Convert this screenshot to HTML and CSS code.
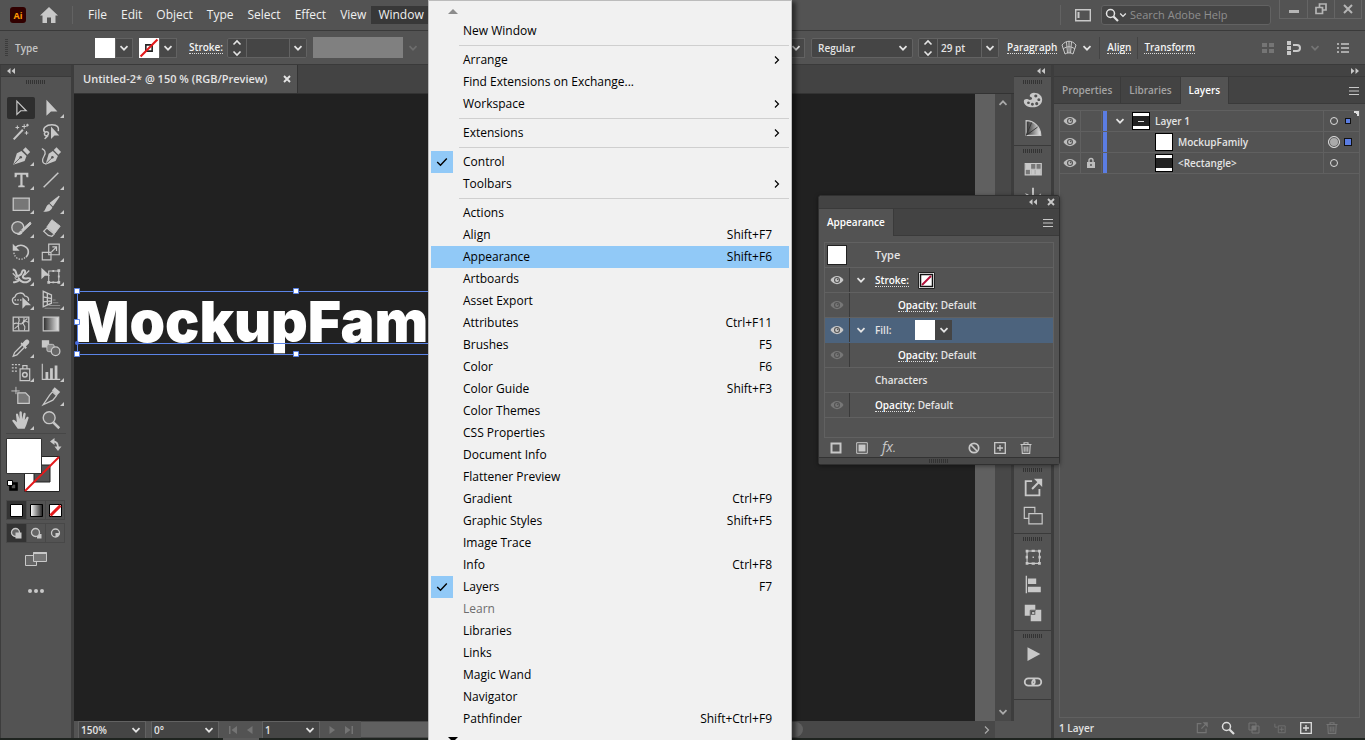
FILE: index.html
```html
<!DOCTYPE html>
<html lang="en">
<head>
<meta charset="utf-8">
<title>Untitled-2* @ 150 % (RGB/Preview)</title>
<link rel="stylesheet" href="styles.css">
</head>
<body>
<svg class="sprite" aria-hidden="true">
  <defs>
    <linearGradient id="fade"><stop offset="0" stop-color="#2b2b2b"/><stop offset="1" stop-color="#e8e8e8"/></linearGradient>
    <linearGradient id="fadeLight"><stop offset="0" stop-color="#fff"/><stop offset="1" stop-color="#222"/></linearGradient>
  </defs>
  <symbol id="chev" viewBox="0 0 10 10"><path d="M1.5 3.2 5 6.7l3.5-3.5" fill="none" stroke="currentColor" stroke-width="1.7"/></symbol>
  <symbol id="spin" viewBox="0 0 10 18"><path d="M1.5 5.5 5 2l3.5 3.5M1.5 12.500 5 16l3.500-3.500" fill="none" stroke="currentColor" stroke-width="1.600"/></symbol>
  <symbol id="dbl-left" viewBox="0 0 10 8"><path d="M4.500 1v6L1 4zM9 1v6L5.500 4z" fill="currentColor"/></symbol>
  <symbol id="dbl-right" viewBox="0 0 10 8"><path d="M1 1v6l3.500-3zM5.500 1v6L9 4z" fill="currentColor"/></symbol>
  <symbol id="cross" viewBox="0 0 10 10"><path d="M2 2l6 6M8 2L2 8" stroke="currentColor" stroke-width="1.900"/></symbol>
  <symbol id="burger" viewBox="0 0 12 10"><path d="M1 1.500h10M1 5h10M1 8.500h10" stroke="currentColor"/></symbol>
  <symbol id="eye" viewBox="0 0 14 10"><path d="M.5 5C3.500-.5 10.500-.5 13.500 5 10.500 10.500 3.500 10.500.5 5z" fill="currentColor"/><circle cx="7" cy="5" r="3" fill="#535353"/><circle cx="7" cy="5" r="1.900" fill="currentColor"/><circle cx="7.600" cy="4.400" r=".8" fill="#535353"/></symbol>
  <symbol id="lock" viewBox="0 0 10 12"><path d="M3 5V3.500a2 2 0 0 1 4 0V5" fill="none" stroke="currentColor" stroke-width="1.400"/><path d="M1 5h8v6H1z" fill="currentColor"/><path d="M5 7v2" stroke="#444" stroke-width="1.300"/></symbol>
  <symbol id="plus-box" viewBox="0 0 12 12"><path d="M.7.7h10.600v10.600H.7zM6 3v6M3 6h6" fill="none" stroke="currentColor" stroke-width="1.300"/></symbol>
  <symbol id="trash" viewBox="0 0 12 12"><path d="M.5 2.500h11M4 2V.7h4V2M1.800 3l.5 8.400h7.400l.5-8.400M4.200 4.500v5.300M6 4.500v5.300M7.800 4.500v5.300" fill="none" stroke="currentColor" stroke-width="1.100"/></symbol>
  <symbol id="lens" viewBox="0 0 14 14"><circle cx="5.500" cy="5.500" r="4" fill="none" stroke="currentColor" stroke-width="1.500"/><path d="M8.500 8.500l4.500 4.500" stroke="currentColor" stroke-width="2.200"/></symbol>
  <symbol id="export" viewBox="0 0 24 24"><path d="M11 4.500H4v15.500h15v-7" fill="none" stroke="currentColor" stroke-width="2"/><path d="M11 13l8-8" stroke="currentColor" stroke-width="2.200"/><path d="M13 2h9v9z" fill="currentColor"/></symbol>
  <symbol id="first" viewBox="0 0 10 10"><path d="M1 1h1.500v8H1zM9 1v8L3.500 5z" fill="currentColor"/></symbol>
  <symbol id="prev" viewBox="0 0 10 10"><path d="M7.500 1v8L2 5z" fill="currentColor"/></symbol>
  <symbol id="next" viewBox="0 0 10 10"><path d="M2.500 1v8L8 5z" fill="currentColor"/></symbol>
  <symbol id="last" viewBox="0 0 10 10"><path d="M7.500 1H9v8H7.500zM1 1v8l5.500-4z" fill="currentColor"/></symbol>
  <symbol id="submenu" viewBox="0 0 8 10"><path d="M2 1.500 5.500 5 2 8.500" fill="none" stroke="currentColor" stroke-width="1.200"/></symbol>
  <symbol id="tick" viewBox="0 0 12 10"><path d="M1.200 5 4.500 8.200 10.800 1.500" fill="none" stroke="currentColor" stroke-width="1.400"/></symbol>

  <symbol id="t-select" viewBox="0 0 24 24"><path d="M7.500 4.500v14.500l4.200-4h6z" fill="none" stroke="currentColor" stroke-width="1.300"/></symbol>
  <symbol id="t-direct" viewBox="0 0 24 24"><path d="M7 3v17.500l5-4.800h7z" fill="currentColor"/></symbol>
  <symbol id="t-wand" viewBox="0 0 24 24"><path d="M4 20 14 9.500" stroke="currentColor" stroke-width="2.200"/><path d="M15.500 3.500v5M13 6h5M8 5v4M6 7h4M18 11v4M16 13h4M19 3v3M17.500 4.500h3" stroke="currentColor" stroke-width="1.100"/></symbol>
  <symbol id="t-lasso" viewBox="0 0 24 24"><path d="M9 16c-4 1-5.500-2-3-4 2-1 4 .5 3 2.500-1 3-3 4-4 5M5 12C2 8 7 4 13 4s8 3 7 7" fill="none" stroke="currentColor" stroke-width="1.700"/><path d="M12 6v13.500l3.800-3.800H21z" fill="currentColor"/></symbol>
  <symbol id="t-pen" viewBox="0 0 24 24"><path d="M12.500 6.500 18 12 16 17.500 3.500 21.500 7.500 9z" fill="currentColor"/><path d="M14 5.500 17 2.500 22 7.500l-3 3z" fill="currentColor"/><path d="M4.500 20.500l6.500-6.500" stroke="#535353"/><circle cx="11.700" cy="13.300" r="1.400" fill="#535353"/></symbol>
  <symbol id="t-curve" viewBox="0 0 24 24"><path d="M14 6.500 19.500 12 17 17.500 6 21.500 9.500 9.500z" fill="currentColor"/><path d="M15 5.500 18 2.500 23 7.500l-3 3z" fill="currentColor"/><path d="M7 20l6-6" stroke="#535353"/><circle cx="13.500" cy="13.300" r="1.400" fill="#535353"/><path d="M2 4c3 1 5 4 2.500 8C2 16 2 20.500 6.500 20.500" fill="none" stroke="currentColor" stroke-width="1.400"/></symbol>
  <symbol id="t-type" viewBox="0 0 24 24"><path d="M5 4h15v5h-2L17.200 6.300H13.700v11.500l2.300.5V20h-7v-1.700l2.300-.5V6.300H7.800L7 9H5z" fill="currentColor"/></symbol>
  <symbol id="t-line" viewBox="0 0 24 24"><path d="M4 20 20 4" stroke="currentColor" stroke-width="1.600"/></symbol>
  <symbol id="t-rect" viewBox="0 0 24 24"><path d="M3.500 5.500h17.500v13.500H3.500z" fill="#777" stroke="currentColor" stroke-width="1.400"/></symbol>
  <symbol id="t-brush" viewBox="0 0 24 24"><path d="M21 3.500 11.500 11l2.500 2.500z" fill="currentColor" stroke="currentColor" stroke-width="1.500"/><path d="M10 12l3.500 3.500c-1 3.500-5 5.500-10 5 3-1.500 2.500-7 6.500-8.500z" fill="currentColor"/></symbol>
  <symbol id="t-blob" viewBox="0 0 24 24"><circle cx="8.500" cy="11.500" r="6.500" fill="#6a6a6a" stroke="currentColor" stroke-width="1.500"/><path d="M22 5.500 12.500 14l1.800 1.800L23 7.500z" fill="currentColor" stroke="currentColor"/><path d="M11.800 14.800l2 2c-1 2.500-3.500 3-6.300 2.700 2-1 2-3.500 4.300-4.700z" fill="currentColor"/></symbol>
  <symbol id="t-eraser" viewBox="0 0 24 24"><path d="M13 3l9 7-6 8-8.500-7z" fill="currentColor" stroke="currentColor"/><path d="M7.500 12l8 6.500-2.500 2.500-4-1-5-4.500z" fill="none" stroke="currentColor" stroke-width="1.300"/></symbol>
  <symbol id="t-rotate" viewBox="0 0 24 24"><path d="M6 7c6-5 14-1 14 5 0 2-1 4-2.500 5.500" fill="none" stroke="currentColor" stroke-width="1.800"/><path d="M16.500 18C12 22 5 19.500 4.200 12.500" fill="none" stroke="currentColor" stroke-width="1.400" stroke-dasharray="1.500 1.500"/><path d="M3 3v7.500h7.500z" fill="currentColor"/></symbol>
  <symbol id="t-scale" viewBox="0 0 24 24"><path d="M9.500 3.500H21v11.500H9.500zM2.500 12.500h9.500v8H2.500z" fill="none" stroke="currentColor" stroke-width="1.300"/><path d="M12.500 12l5-5M13.500 6.500h4.500v4.500" fill="none" stroke="currentColor" stroke-width="1.300"/></symbol>
  <symbol id="t-width" viewBox="0 0 24 24"><path d="M3 5c4 0 3 3 4.500 6 1 2 5 0 5.500-3s4-3 3.500 0-4 4-2 6 7-1 7.500 1-4 5-8 3.500-5-5-4-3.500-3 4.500-6.500 3.500" fill="none" stroke="currentColor" stroke-width="2.200"/><circle cx="7.500" cy="14" r="2" fill="none" stroke="currentColor"/><path d="M3 9l5 5M16 11l5-5" stroke="currentColor" stroke-width="1.300"/></symbol>
  <symbol id="t-free" viewBox="0 0 24 24"><path d="M9.500 6.500H20.500v12.500H9.500z" fill="none" stroke="currentColor" stroke-width="1.200"/><path d="M19 4.500h3v3h-3zM19 17.500h3v3h-3zM8 17.500h3v3H8zM13.500 5.500h2v2h-2zM13.500 18h2v2h-2zM19.500 11.500h2v2h-2z" fill="currentColor"/><path d="M1.500 3v12.500l3.800-3.800h5.700z" fill="currentColor"/></symbol>
  <symbol id="t-shape" viewBox="0 0 24 24"><path d="M9.500 16.500c-7 1.500-9-6-4-8C6.500 4 14 2.500 16 7.500c3.500.5 5 3 4 5.500" fill="none" stroke="currentColor" stroke-width="1.400"/><path d="M5 12h9" stroke="currentColor" stroke-width="1.500" stroke-dasharray="1.500 1.500"/><path d="M13.500 9v12.500l3.700-3.700H23z" fill="currentColor"/></symbol>
  <symbol id="t-persp" viewBox="0 0 24 24"><path d="M3.500 2.500v17l9-4V6.500zM8 4.500v12.500M3.500 8.500l9 2M3.500 14l9-1" fill="none" stroke="currentColor" stroke-width="1.400"/><path d="M14 12h3M14 15h6M10 18h12M5 21h17" stroke="#909090"/></symbol>
  <symbol id="t-mesh" viewBox="0 0 24 24"><path d="M3.500 4.500h17v15h-17z" fill="none" stroke="currentColor" stroke-width="1.400"/><path d="M4 12c4-3 7 2 10-1s4-2 6-1M9 5c3 3-1 6 0 9s0 3 1 5M15 5c2 3-3 5 0 8s0 4 1 6M5 17l5-4M13 11l6-5" fill="none" stroke="currentColor" stroke-width="1.200"/></symbol>
  <symbol id="t-grad" viewBox="0 0 24 24"><path d="M3.500 4.500h17v15h-17z" fill="url(#fade)" stroke="currentColor" stroke-width="1.200"/></symbol>
  <symbol id="t-drop" viewBox="0 0 24 24"><path d="M13 9 5 17 3.500 21l4-1.500 8-8" fill="none" stroke="currentColor" stroke-width="1.400"/><path d="M11.500 7.500l5.500 5.500 1.500-1.500-1.200-1.200 3.200-3.300c2-2.500-1.500-5.500-4-3.500l-3 3.200-1-1z" fill="currentColor"/></symbol>
  <symbol id="t-blend" viewBox="0 0 24 24"><path d="M2 3.500h8v8H2z" fill="currentColor"/><rect x="7.500" y="8" width="8" height="8" rx="2" fill="#888" stroke="currentColor"/><circle cx="17" cy="15.500" r="4.700" fill="#666" stroke="currentColor" stroke-width="1.400"/></symbol>
  <symbol id="t-spray" viewBox="0 0 24 24"><path d="M11 8.500h10.500v13H11zM14 8.500V5h4.500v3.500" fill="none" stroke="currentColor" stroke-width="1.300"/><circle cx="16.200" cy="15" r="2.500" fill="none" stroke="currentColor" stroke-width="1.600"/><path d="M2 4h2M5.500 4h2M9 4h2M2 7.500h2M5.500 7.500h2M2 11h2M5.500 11h2" stroke="currentColor" stroke-width="1.300"/></symbol>
  <symbol id="t-graph" viewBox="0 0 24 24"><path d="M2.500 3v17H22" fill="none" stroke="currentColor" stroke-width="1.200"/><path d="M6 12h3v8H6zM11 8h3v12h-3zM16 5h3v15h-3z" fill="currentColor"/></symbol>
  <symbol id="t-board" viewBox="0 0 24 24"><path d="M8.500 8.500h8.500l4 4v7.500H8.500z" fill="#777" stroke="currentColor" stroke-width="1.300"/><path d="M6.500 2v8M1.500 6.500h9" stroke="currentColor"/></symbol>
  <symbol id="t-slice" viewBox="0 0 24 24"><path d="M13.500 7.500l4.500 4-4 5L3.500 21.500 10.500 11z" fill="none" stroke="currentColor" stroke-width="1.400"/><path d="M13 6l3-3.500 6 5-3.500 4z" fill="currentColor"/></symbol>
  <symbol id="t-hand" viewBox="0 0 24 24"><path d="M8.500 21.500 2.500 13c0-1.500 2-1.500 3-.5l2 2L6.500 6c.3-1.500 2-1.400 2.400 0l1.400 5V3.500c.3-1.400 2.300-1.400 2.600 0l.3 7.500 1.500-6c.5-1.300 2.300-1 2.400.4l-1 6.600 2-3c.8-1 2.400-.4 2.200.9l-2.500 7.600-1.800 4z" fill="currentColor"/></symbol>
  <symbol id="t-zoom" viewBox="0 0 24 24"><circle cx="10" cy="9.500" r="6.500" fill="#666" stroke="currentColor" stroke-width="1.500"/><path d="M14.500 14.500l6.500 6.500" stroke="currentColor" stroke-width="2.800"/></symbol>

  <symbol id="d-color" viewBox="0 0 24 24"><path fill-rule="evenodd" d="M13 4c5 0 9 3 9 7.500 0 5-4 8.500-10 8.500S2 17 2 13.500C2 11 5 10.500 7 11.500s4 0 4-1.500-3-1-2.500-3C9 5 11 4 13 4zM15 6a1.700 1.700 0 1 0 .1 0zM18.300 10a1.600 1.600 0 1 0 .1 0zM16 14.300a1.700 1.700 0 1 0 .1 0zM11.300 15a1.600 1.600 0 1 0 .1 0zM7 13.500a1.500 1.500 0 1 0 .1 0z" fill="currentColor"/></symbol>
  <symbol id="d-guide" viewBox="0 0 24 24"><path d="M4.500 4v16h16C20.500 11 13 4 4.500 4z" fill="url(#fade)" stroke="currentColor" stroke-width="1.300"/><path d="M4.500 20 10.500 6M4.500 20 17 11" stroke="#333"/></symbol>
  <symbol id="d-swatch" viewBox="0 0 24 24"><path d="M3.500 6h17.500v12.500H3.500zM3.500 12.300h17.500M9.300 6v12.500M15.200 6v12.500" fill="#777" stroke="currentColor" stroke-width="1.300"/><path d="M4 6.500h5v6H4zM15 12.500h5.500v6H15zM10 12.500h4v6h-4z" fill="currentColor"/></symbol>
  <symbol id="d-brush" viewBox="0 0 24 24"><path d="M11 2h2v9h3l1 4H7l1-4h3zM3 8l4 1v3zM21 8l-4 3 2 2z" fill="currentColor"/></symbol>
  <symbol id="d-boards" viewBox="0 0 24 24"><path d="M7.500 14.500h-5v-12H14v6M7.500 9.500H22v11H7.500z" fill="none" stroke="currentColor" stroke-width="1.300"/></symbol>
  <symbol id="d-transform" viewBox="0 0 24 24"><path d="M5.500 5.500h13.500v13.500H5.500z" fill="none" stroke="currentColor" stroke-width="1.200"/><path d="M4 4h3v3H4zM17.500 4h3v3h-3zM4 17.500h3v3H4zM17.500 17.500h3v3h-3zM10.500 4h3.500v2.500h-3.500zM10.500 18h3.500v2.500h-3.500zM4 10.700h2.500v3H4zM18 10.700h2.500v3H18zM11.500 11.500h1.500V13h-1.500z" fill="currentColor"/></symbol>
  <symbol id="d-align" viewBox="0 0 24 24"><path d="M4 2h1.500v19H4zM6.500 5h9v6h-9zM6.500 14h14v6h-14z" fill="currentColor"/></symbol>
  <symbol id="d-path" viewBox="0 0 24 24"><path fill-rule="evenodd" d="M3 3h11.500v5.500H21V21H9.500v-6H3zM9.500 9.500v4.500h5V9.500z" fill="currentColor"/><path d="M9 15V9h6" fill="none" stroke="#535353"/><path d="M11 11h2.500v2H11z" fill="currentColor"/></symbol>
  <symbol id="d-play" viewBox="0 0 24 24"><path d="M6 4.500v15l14-7.500z" fill="currentColor"/></symbol>
  <symbol id="d-link" viewBox="0 0 24 24"><path d="M13 16H7a4 4 0 0 1 0-8h4c3 0 4 5 1.500 6.500M11 8h6a4 4 0 0 1 0 8h-3c-3 0-4-4.500-1.500-6" fill="none" stroke="currentColor" stroke-width="2"/></symbol>
</svg>

<div class="app">
  <header class="menubar">
    <svg class="ai-logo" viewBox="0 0 16 16" role="img" aria-label="Ai"><rect width="16" height="16" rx="3" fill="#310000"/><text x="8" y="11.500" text-anchor="middle" class="ai-text">Ai</text></svg>
    <button class="home" aria-label="Home"><svg viewBox="0 0 18 16"><path d="M9 0 18 8.500h-2.500V16H11v-5.500H7V16H2.500V8.500H0z" fill="currentColor"/></svg></button>
    <nav class="menus">
      <button>File</button><button>Edit</button><button>Object</button><button>Type</button><button>Select</button><button>Effect</button><button>View</button><button class="open">Window</button>
    </nav>
    <div class="menubar-right">
      <button class="workspace" aria-label="Switch workspace"><svg viewBox="0 0 16 14"><path d="M.7 1.700h14.600v11H.7z" fill="none" stroke="currentColor" stroke-width="1.400"/><path d="M2.500 4h2v6h-2z" fill="currentColor"/></svg></button>
      <label class="search"><svg class="i14"><use href="#lens"/></svg><svg class="i8"><use href="#chev"/></svg><input type="search" placeholder="Search Adobe Help" aria-label="Search Adobe Help"></label>
      <div class="winctl">
        <button aria-label="Minimize"><svg viewBox="0 0 12 12"><path d="M1 7h10v3H1z" fill="currentColor"/></svg></button>
        <button aria-label="Restore"><svg viewBox="0 0 12 12"><path d="M4.500 4V1H11v6H8M1 4.500h6.500V10.500H1z" fill="none" stroke="currentColor" stroke-width="1.700"/></svg></button>
        <button aria-label="Close"><svg viewBox="0 0 12 12"><path d="M2 2l8 8M10 2l-8 8" stroke="currentColor" stroke-width="2"/></svg></button>
      </div>
    </div>
  </header>

  <section class="control" aria-label="Control">
    <div class="control-left">
      <span class="grip-v"></span>
      <span class="kind">Type</span>
      <button class="swatch-btn" aria-label="Fill"><span class="chip"></span><span class="drop"><svg class="i10"><use href="#chev"/></svg></span></button>
      <button class="swatch-btn" aria-label="Stroke color"><svg class="chip" viewBox="0 0 19 19"><path d="M6.500 6.500h6v6h-6z" fill="none" stroke="#222" stroke-width="1.500"/><path d="M1.500 17.500l16-16" stroke="#e3191b" stroke-width="2"/></svg><span class="drop"><svg class="i10"><use href="#chev"/></svg></span></button>
      <label class="dotted bold" for="sw">Stroke:</label>
      <span class="num"><svg class="spin"><use href="#spin"/></svg><input id="sw" type="text"><span class="drop"><svg class="i10"><use href="#chev"/></svg></span></span>
      <span class="profile"><span></span><svg class="i10"><use href="#chev"/></svg></span>
    </div>
    <div class="control-right">
      <button class="drop family" aria-label="Font family"><svg class="i10"><use href="#chev"/></svg></button>
      <span class="combo style-combo"><select aria-label="Font style"><option>Regular</option></select><svg class="i10"><use href="#chev"/></svg></span>
      <span class="num size"><svg class="spin"><use href="#spin"/></svg><input type="text" value="29 pt" aria-label="Font size"><span class="drop"><svg class="i10"><use href="#chev"/></svg></span></span>
      <a class="dotted" href="#paragraph">Paragraph</a>
      <button class="warp" aria-label="Make envelope"><svg viewBox="0 0 16 16"><path d="M1 5c4-5 10-5 14 0l-3 9c-2-1.500-6-1.500-8 0zM5.500 2 6.500 13M10.500 2 9.500 13M2 9c4-3 8-3 12 0M8 1v12" fill="none" stroke="currentColor"/></svg><svg class="i10"><use href="#chev"/></svg></button>
      <span class="vsep"></span>
      <a class="dotted" href="#align">Align</a>
      <span class="vsep"></span>
      <a class="dotted" href="#transform">Transform</a>
    </div>
    <div class="control-end">
      <button class="dim" aria-label="Isolate"><svg viewBox="0 0 12 12"><path d="M0 1h5v4H0zM7 1h5v4H7zM0 7h5v4H0zM7 7h5v4H7z" fill="currentColor"/></svg></button>
      <button aria-label="Snap"><svg viewBox="0 0 14 14"><path d="M0 0h4v4H0zM0 5h4v4H0zM0 10h4v4H0z" fill="currentColor"/><path d="M6 4h4a3 3 0 0 1 0 6H6" fill="none" stroke="currentColor" stroke-width="2"/></svg></button>
      <button class="dim" aria-label="Snap options"><svg class="i10"><use href="#chev"/></svg></button>
      <button class="list-btn" aria-label="Control menu"><svg viewBox="0 0 12 10"><path d="M0 1h2M0 5h2M0 9h2M4 1h8M4 5h8M4 9h8" stroke="currentColor" stroke-width="1.400"/></svg></button>
    </div>
  </section>

  <main class="work">
    <aside class="tools" aria-label="Tools">
      <div class="strip"><svg class="arrows"><use href="#dbl-left"/></svg></div>
      <div class="grip"></div>
      <div class="tool-grid">
        <button class="on" aria-label="Selection"><svg><use href="#t-select"/></svg></button><button class="more" aria-label="Direct selection"><svg><use href="#t-direct"/></svg></button>
        <button aria-label="Magic wand"><svg><use href="#t-wand"/></svg></button><button aria-label="Lasso"><svg><use href="#t-lasso"/></svg></button>
        <button class="more" aria-label="Pen"><svg><use href="#t-pen"/></svg></button><button aria-label="Curvature"><svg><use href="#t-curve"/></svg></button>
        <button class="more" aria-label="Type"><svg><use href="#t-type"/></svg></button><button class="more" aria-label="Line"><svg><use href="#t-line"/></svg></button>
        <button class="more" aria-label="Rectangle"><svg><use href="#t-rect"/></svg></button><button class="more" aria-label="Paintbrush"><svg><use href="#t-brush"/></svg></button>
        <button class="more" aria-label="Shaper"><svg><use href="#t-blob"/></svg></button><button class="more" aria-label="Eraser"><svg><use href="#t-eraser"/></svg></button>
        <button class="more" aria-label="Rotate"><svg><use href="#t-rotate"/></svg></button><button class="more" aria-label="Scale"><svg><use href="#t-scale"/></svg></button>
        <button class="more" aria-label="Width"><svg><use href="#t-width"/></svg></button><button class="more" aria-label="Free transform"><svg><use href="#t-free"/></svg></button>
        <button class="more" aria-label="Shape builder"><svg><use href="#t-shape"/></svg></button><button class="more" aria-label="Perspective grid"><svg><use href="#t-persp"/></svg></button>
        <button aria-label="Mesh"><svg><use href="#t-mesh"/></svg></button><button aria-label="Gradient"><svg><use href="#t-grad"/></svg></button>
        <button class="more" aria-label="Eyedropper"><svg><use href="#t-drop"/></svg></button><button aria-label="Blend"><svg><use href="#t-blend"/></svg></button>
        <button class="more" aria-label="Symbol sprayer"><svg><use href="#t-spray"/></svg></button><button class="more" aria-label="Column graph"><svg><use href="#t-graph"/></svg></button>
        <button aria-label="Artboard"><svg><use href="#t-board"/></svg></button><button class="more" aria-label="Slice"><svg><use href="#t-slice"/></svg></button>
        <button class="more" aria-label="Hand"><svg><use href="#t-hand"/></svg></button><button aria-label="Zoom"><svg><use href="#t-zoom"/></svg></button>
      </div>
      <svg class="fillstroke" viewBox="0 0 60 58" role="img" aria-label="Fill and stroke">
        <path fill-rule="evenodd" d="M18.500 19.500h35v35h-35zM28 28v17h16V28z" fill="#fff" stroke="#222"/><path d="M19 54l34-34" stroke="#e3191b" stroke-width="2"/>
        <path d="M.5 1.500h35v35h-35z" fill="#fff" stroke="#333"/>
        <path d="M47 4.500c3.500 0 5 2 5 6" fill="none" stroke="#c8c8c8" stroke-width="1.800"/><path d="M48.500 1v7L44 4.500zM48.500 9.500h7L52 14z" fill="#c8c8c8"/>
        <path d="M4.500 46.500h6v6h-6z" fill="none" stroke="#000" stroke-width="2.600"/><path d="M1.500 43.500h5v5h-5z" fill="#fff" stroke="#000"/>
      </svg>
      <div class="modes">
        <button class="on" aria-label="Color"><svg viewBox="0 0 13 13"><path d="M.5.5h12v12H.5z" fill="#fff" stroke="#000"/></svg></button>
        <button aria-label="Gradient"><svg viewBox="0 0 13 13"><path d="M.5.5h12v12H.5z" fill="url(#fadeLight)" stroke="#000"/></svg></button>
        <button aria-label="None"><svg viewBox="0 0 13 13"><path d="M.5.5h12v12H.5z" fill="#fff" stroke="#000"/><path d="M1.500 11.500l10-10" stroke="#e3191b" stroke-width="3"/></svg></button>
      </div>
      <div class="modes">
        <button class="on" aria-label="Draw normal"><svg viewBox="0 0 13 13"><circle cx="5.500" cy="5.500" r="4" fill="#666" stroke="#c8c8c8" stroke-width="1.300"/><path d="M5.500 5.500h6v6h-6z" fill="#c8c8c8"/></svg></button>
        <button aria-label="Draw behind"><svg viewBox="0 0 13 13"><path d="M7 7h4.500v4.500H7z" fill="#c8c8c8"/><circle cx="5.500" cy="5.500" r="4" fill="#666" stroke="#c8c8c8" stroke-width="1.300"/></svg></button>
        <button aria-label="Draw inside"><svg viewBox="0 0 13 13"><circle cx="6.500" cy="6" r="4" fill="#555" stroke="#c8c8c8" stroke-width="1.300"/><path d="M6.500 6h3.500v2L8.500 10h-2z" fill="#c8c8c8"/></svg></button>
      </div>
      <button class="screen" aria-label="Screen mode"><svg viewBox="0 0 22 16"><path d="M.5 4.500h11v10H.5z" fill="#666" stroke="#c8c8c8"/><path d="M8.500 1.500h13v9h-13z" fill="#777" stroke="#c8c8c8"/><path d="M8.500 2h13" stroke="#c8c8c8" stroke-width="2"/></svg></button>
      <button class="dots" aria-label="Edit toolbar"><i></i><i></i><i></i></button>
    </aside>

    <section class="document">
      <div class="doc-tabs"><div class="doc-tab"><span>Untitled-2* @ 150 % (RGB/Preview)</span><button aria-label="Close document"><svg class="i10"><use href="#cross"/></svg></button></div></div>
      <div class="stage">
        <div class="artboard">
          <div class="art">
            <span class="art-text">MockupFam</span>
            <svg class="bounds" viewBox="0 0 438 63"><path d="M0 0h438v63H0zM0 52h438" fill="none" stroke="#5b84e8" stroke-width="1" shape-rendering="crispEdges"/><path d="M-2.500-2.500h5v5h-5zM-2.500 28.500h5v5h-5zM-2.500 60.500h5v5h-5zM216.500-2.500h5v5h-5zM216.500 60.500h5v5h-5z" fill="#fff" stroke="#5b84e8"/><circle cx="0" cy="52" r="2" fill="#4a6de0"/></svg>
          </div>
        </div>
        <div class="beyond"></div>
        <div class="vscroll"><svg class="i10 up"><use href="#chev"/></svg><svg class="i10"><use href="#chev"/></svg></div>
      </div>
      <div class="status">
        <span class="combo zoomlvl"><select aria-label="Zoom"><option>150%</option></select><svg class="i10"><use href="#chev"/></svg></span>
        <span class="combo angle"><select aria-label="Rotate view"><option>0°</option></select><svg class="i10"><use href="#chev"/></svg></span>
        <button class="page" aria-label="First"><svg class="i10"><use href="#first"/></svg></button><button class="page" aria-label="Previous"><svg class="i10"><use href="#prev"/></svg></button>
        <span class="combo boardno"><select aria-label="Artboard number"><option>1</option></select><svg class="i10"><use href="#chev"/></svg></span>
        <button class="page" aria-label="Next"><svg class="i10"><use href="#next"/></svg></button><button class="page" aria-label="Last"><svg class="i10"><use href="#last"/></svg></button>
        <div class="hscroll"><span class="thumb"></span><svg class="i10"><use href="#submenu"/></svg></div>
      </div>
    </section>

    <aside class="dock">
      <div class="strip end"><svg class="arrows"><use href="#dbl-left"/></svg></div>
      <div class="group"><button aria-label="Color"><svg><use href="#d-color"/></svg></button><button aria-label="Color guide"><svg><use href="#d-guide"/></svg></button></div>
      <div class="group"><button aria-label="Swatches"><svg><use href="#d-swatch"/></svg></button><button aria-label="Brushes"><svg><use href="#d-brush"/></svg></button><button aria-label="Symbols"><svg><use href="#t-spray"/></svg></button></div>
      <div class="group"><button aria-label="Stroke"><svg><use href="#t-line"/></svg></button><button aria-label="Gradient"><svg><use href="#t-grad"/></svg></button></div>
      <div class="group"><button aria-label="Transparency"><svg><use href="#t-blend"/></svg></button><button aria-label="Appearance"><svg><use href="#t-zoom"/></svg></button><button aria-label="Graphic styles"><svg><use href="#t-rect"/></svg></button><button aria-label="Layers"><svg><use href="#d-boards"/></svg></button><button aria-label="Libraries"><svg><use href="#t-mesh"/></svg></button></div>
      <div class="group"><button aria-label="Asset export"><svg><use href="#export"/></svg></button><button aria-label="Artboards"><svg><use href="#d-boards"/></svg></button></div>
      <div class="group"><button aria-label="Transform"><svg><use href="#d-transform"/></svg></button><button aria-label="Align"><svg><use href="#d-align"/></svg></button><button aria-label="Pathfinder"><svg><use href="#d-path"/></svg></button></div>
      <div class="group"><button aria-label="Actions"><svg><use href="#d-play"/></svg></button><button aria-label="Links"><svg><use href="#d-link"/></svg></button></div>
    </aside>

    <aside class="panel">
      <div class="strip end"><svg class="arrows"><use href="#dbl-right"/></svg></div>
      <div class="tabs"><button>Properties</button><button>Libraries</button><button class="on">Layers</button><button class="menu-btn" aria-label="Panel menu"><svg><use href="#burger"/></svg></button></div>
      <div class="layers">
        <div class="layer first"><button class="c-eye" aria-label="Toggle visibility"><svg class="eye"><use href="#eye"/></svg></button><span class="c-lock"></span><span class="bar"></span><button class="c-open" aria-label="Collapse"><svg class="i10"><use href="#chev"/></svg></button><span class="thumbnail bands"><i></i></span><span class="name">Layer 1</span><span class="c-target"><i class="ring"></i><i class="sq small"></i></span></div>
        <div class="layer child"><button class="c-eye" aria-label="Toggle visibility"><svg class="eye"><use href="#eye"/></svg></button><span class="c-lock"></span><span class="bar"></span><span class="c-open"></span><span class="thumbnail"></span><span class="name">MockupFamily</span><span class="c-target"><i class="ring full"></i><i class="sq"></i></span></div>
        <div class="layer child"><button class="c-eye" aria-label="Toggle visibility"><svg class="eye"><use href="#eye"/></svg></button><button class="c-lock" aria-label="Unlock"><svg><use href="#lock"/></svg></button><span class="bar"></span><span class="c-open"></span><span class="thumbnail bands"></span><span class="name">&lt;Rectangle&gt;</span><span class="c-target"><i class="ring"></i></span></div>
      </div>
      <div class="panel-foot"><span>1 Layer</span>
        <div><button class="dim" aria-label="Collect for export"><svg><use href="#export"/></svg></button><button aria-label="Locate object"><svg><use href="#lens"/></svg></button><button class="dim" aria-label="Clipping mask"><svg viewBox="0 0 12 12"><path d="M1 1h7v7H1zM4 4h7v7H4z" fill="none" stroke="currentColor"/><path d="M4 4h4v4H4z" fill="currentColor"/></svg></button><button class="dim" aria-label="New sublayer"><svg viewBox="0 0 14 12"><path d="M5 3.500h8v8H5zM9 5v5M6.500 7.500h5M1 1v4h3" fill="none" stroke="currentColor"/></svg></button><button aria-label="New layer"><svg><use href="#plus-box"/></svg></button><button class="dim" aria-label="Delete"><svg><use href="#trash"/></svg></button></div>
      </div>
    </aside>
  </main>
  <div class="taskbar"><span></span></div>
</div>

<section class="appearance" aria-label="Appearance">
  <div class="strip end"><svg class="arrows"><use href="#dbl-left"/></svg><svg class="i10"><use href="#cross"/></svg></div>
  <div class="tabs"><button class="on">Appearance</button><button class="menu-btn" aria-label="Panel menu"><svg><use href="#burger"/></svg></button></div>
  <div class="attrs">
    <div class="attr"><span class="chip edge"></span><b>Type</b></div>
    <div class="attr"><button class="c-vis" aria-label="Toggle visibility"><svg class="eye"><use href="#eye"/></svg></button><svg class="i10 tw"><use href="#chev"/></svg><a class="dotted" href="#stroke">Stroke:</a><svg class="nochip" viewBox="0 0 17 17"><path d="M.5.5h16v16H.5z" fill="#fff" stroke="#222"/><path d="M2.500 2.500h12v12h-12z" fill="#fff" stroke="#111" stroke-width="1.500"/><path d="M4 13l9-9" stroke="#b3123b" stroke-width="2"/></svg></div>
    <div class="attr sub"><button class="c-vis off" aria-label="Toggle visibility"><svg class="eye"><use href="#eye"/></svg></button><a class="dotted" href="#opacity">Opacity:</a><span>Default</span></div>
    <div class="attr sel"><button class="c-vis" aria-label="Toggle visibility"><svg class="eye"><use href="#eye"/></svg></button><svg class="i10 tw"><use href="#chev"/></svg><span class="fill-name">Fill:</span><button class="swatch-btn" aria-label="Fill color"><span class="chip"></span><span class="drop"><svg class="i10"><use href="#chev"/></svg></span></button></div>
    <div class="attr sub"><button class="c-vis off" aria-label="Toggle visibility"><svg class="eye"><use href="#eye"/></svg></button><a class="dotted" href="#opacity">Opacity:</a><span>Default</span></div>
    <div class="attr plain"><span>Characters</span></div>
    <div class="attr main-op"><button class="c-vis off" aria-label="Toggle visibility"><svg class="eye"><use href="#eye"/></svg></button><a class="dotted" href="#opacity">Opacity:</a><span>Default</span></div>
    <div class="attr-rest"></div>
  </div>
  <div class="attr-foot">
    <button aria-label="Add new stroke"><svg viewBox="0 0 12 12"><path d="M1.500 1.500h9v9h-9z" fill="none" stroke="currentColor" stroke-width="2"/></svg></button>
    <button aria-label="Add new fill"><svg viewBox="0 0 12 12"><path d="M.7.7h10.600v10.600H.7z" fill="none" stroke="currentColor"/><path d="M2.500 2.500h7v7h-7z" fill="currentColor"/></svg></button>
    <button class="fx" aria-label="Add effect">fx<small>.</small></button>
    <span class="spacer"></span>
    <button aria-label="Clear appearance"><svg viewBox="0 0 12 12"><circle cx="6" cy="6" r="4.700" fill="none" stroke="currentColor" stroke-width="1.700"/><path d="M3 3l6 6" stroke="currentColor" stroke-width="1.700"/></svg></button>
    <button aria-label="Duplicate"><svg><use href="#plus-box"/></svg></button>
    <button aria-label="Delete"><svg><use href="#trash"/></svg></button>
  </div>
  <div class="resize"></div>
</section>

<div class="window-menu" role="menu">
  <div class="scroll-up"><svg viewBox="0 0 10 5"><path d="M5 0l5 5H0z" fill="#8c8c8c"/></svg></div>
  <button class="item"><span class="mark"></span>New Window</button>
  <hr>
  <button class="item"><span class="mark"></span>Arrange<svg class="sub"><use href="#submenu"/></svg></button>
  <button class="item"><span class="mark"></span>Find Extensions on Exchange...</button>
  <button class="item"><span class="mark"></span>Workspace<svg class="sub"><use href="#submenu"/></svg></button>
  <hr>
  <button class="item"><span class="mark"></span>Extensions<svg class="sub"><use href="#submenu"/></svg></button>
  <hr>
  <button class="item"><span class="mark checked"><svg><use href="#tick"/></svg></span>Control</button>
  <button class="item"><span class="mark"></span>Toolbars<svg class="sub"><use href="#submenu"/></svg></button>
  <hr>
  <button class="item"><span class="mark"></span>Actions</button>
  <button class="item"><span class="mark"></span>Align<kbd>Shift+F7</kbd></button>
  <button class="item hot"><span class="mark"></span>Appearance<kbd>Shift+F6</kbd></button>
  <button class="item"><span class="mark"></span>Artboards</button>
  <button class="item"><span class="mark"></span>Asset Export</button>
  <button class="item"><span class="mark"></span>Attributes<kbd>Ctrl+F11</kbd></button>
  <button class="item"><span class="mark"></span>Brushes<kbd>F5</kbd></button>
  <button class="item"><span class="mark"></span>Color<kbd>F6</kbd></button>
  <button class="item"><span class="mark"></span>Color Guide<kbd>Shift+F3</kbd></button>
  <button class="item"><span class="mark"></span>Color Themes</button>
  <button class="item"><span class="mark"></span>CSS Properties</button>
  <button class="item"><span class="mark"></span>Document Info</button>
  <button class="item"><span class="mark"></span>Flattener Preview</button>
  <button class="item"><span class="mark"></span>Gradient<kbd>Ctrl+F9</kbd></button>
  <button class="item"><span class="mark"></span>Graphic Styles<kbd>Shift+F5</kbd></button>
  <button class="item"><span class="mark"></span>Image Trace</button>
  <button class="item"><span class="mark"></span>Info<kbd>Ctrl+F8</kbd></button>
  <button class="item"><span class="mark checked"><svg><use href="#tick"/></svg></span>Layers<kbd>F7</kbd></button>
  <button class="item" disabled><span class="mark"></span>Learn</button>
  <button class="item"><span class="mark"></span>Libraries</button>
  <button class="item"><span class="mark"></span>Links</button>
  <button class="item"><span class="mark"></span>Magic Wand</button>
  <button class="item"><span class="mark"></span>Navigator</button>
  <button class="item"><span class="mark"></span>Pathfinder<kbd>Shift+Ctrl+F9</kbd></button>
  <div class="scroll-down"><svg viewBox="0 0 10 5"><path d="M5 5l5-5H0z" fill="#000"/></svg></div>
</div>
</body>
</html>
```
FILE: styles.css
```css
* { box-sizing: border-box; }
:root {
  --bar: #535353;
  --line: #3a3a3a;
  --head: #434343;
  --field: #454545;
  --edge: #626262;
  --text: #e4e4e4;
  --icon: #c8c8c8;
  --hot: #91c9f7;
}
body {
  margin: 0;
  overflow: hidden;
  font: 600 10px/14px "Open Sans", "Noto Sans", sans-serif;
  color: var(--text);
  background: var(--bar);
}
button, input, select {
  font: inherit;
  color: inherit;
  background: none;
  border: 0;
  padding: 0;
  margin: 0;
  border-radius: 0;
  appearance: none;
  outline: 0;
}
a { color: inherit; text-decoration: none; }
svg { display: block; flex: none; }
.sprite { position: absolute; width: 0; height: 0; }
.i8 { width: 8px; height: 8px; }
.i10 { width: 10px; height: 10px; }
.i14 { width: 14px; height: 14px; }
.dim { color: #757575; }

.app { display: flex; flex-direction: column; height: 100vh; }

/* Menu bar */
.menubar {
  display: flex;
  align-items: center;
  flex: none;
  height: 31px;
  padding-left: 10px;
  border-bottom: 1px solid var(--line);
  font-size: 12px;
  font-weight: 400;
}
.ai-logo { width: 16px; height: 16px; }
.ai-text { font: 700 9px "Open Sans", sans-serif; fill: #ff9a00; }
.home { margin-left: 14px; color: var(--icon); }
.home svg { width: 18px; height: 16px; }
.menus { display: flex; margin-left: 14px; padding-left: 8px; border-left: 1px solid var(--edge); color: #f0f0f0; }
.menus button { height: 18px; padding: 0 7px; }
.menus .open { background: #383838; margin-left: -2px; }
.menubar-right { display: flex; margin-left: auto; height: 100%; align-items: center; }
.workspace { padding-left: 14px; border-left: 1px solid var(--edge); height: 20px; color: var(--icon); }
.workspace svg { width: 16px; height: 14px; }
.search {
  display: flex;
  align-items: center;
  width: 170px;
  height: 20px;
  margin: 0 8px 0 10px;
  padding-left: 3px;
  background: var(--field);
  border: 1px solid var(--edge);
  border-radius: 3px;
  font-size: 11px;
}
.search input { flex: 1; min-width: 0; padding-left: 3px; }
.search input::placeholder { color: #8f8f8f; opacity: 1; }
.winctl { display: flex; align-self: flex-start; margin-right: 3px; border: 1px solid #656565; border-top: 0; color: #b5b5b5; }
.winctl button { display: grid; place-items: center; width: 27px; height: 18px; }
.winctl button + button { border-left: 1px solid #656565; }
.winctl svg { width: 12px; height: 12px; }

/* Control bar */
.control {
  display: grid;
  grid-template-columns: 797px 1fr auto;
  align-items: center;
  flex: none;
  height: 34px;
  border-bottom: 1px solid var(--line);
}
.control-left, .control-right, .control-end { display: flex; align-items: center; }
.control-left { padding-left: 5px; }
.control-right { margin-left: -10px; }
.grip-v { width: 3px; height: 18px; background: repeating-linear-gradient(#3c3c3c 0 1px, transparent 1px 2px); }
.kind { width: 87px; padding-left: 7px; color: #c4c4c4; }
.swatch-btn { display: flex; margin-right: 6px; }
.chip { display: block; width: 20px; height: 20px; background: #fff; }
.drop { display: grid; place-items: center; width: 18px; height: 20px; background: #484848; border: 1px solid var(--edge); }
.dotted { border-bottom: 1px dotted #ddd; line-height: 12px; color: #fff; }
.control .dotted { color: #f4f4f4; }
.control-left .dotted { margin-left: 6px; }
.num { display: flex; align-items: center; height: 20px; margin-left: 4px; background: var(--field); border: 1px solid var(--edge); border-radius: 2px; }
.num .spin { width: 10px; height: 18px; margin: 0 4px; }
.num input { width: 43px; height: 18px; padding-left: 3px; border-left: 1px solid var(--edge); }
.num .drop { height: 18px; border-width: 0 0 0 1px; width: 17px; }
.profile { display: flex; align-items: center; margin-left: 6px; color: #6d6d6d; }
.profile span { width: 90px; height: 21px; margin-right: 5px; background: #808080; }
.combo { display: grid; grid-template-columns: 1fr; align-items: center; background: var(--field); border: 1px solid var(--edge); border-radius: 2px; }
.combo select { grid-area: 1 / 1; width: 100%; height: 18px; padding-left: 6px; }
.combo svg { grid-area: 1 / 1; justify-self: end; margin-right: 4px; pointer-events: none; }
.family { width: 18px; }
.style-combo { width: 102px; margin-left: 6px; }
.control-right .num { margin: 0 8px 0 5px; }
.control-right .num input { width: 44px; }
.warp { display: flex; align-items: center; gap: 5px; margin: 0 7px 0 4px; }
.warp svg:first-child { width: 16px; height: 16px; color: var(--icon); }
.vsep { width: 1px; height: 22px; background: #444; margin: 0 6px; }
.warp + .vsep { margin: 0 7px 0 0; }
.control-end { color: var(--icon); padding-right: 16px; gap: 9px; }
.control-end button:first-child svg { width: 12px; height: 12px; }
.control-end button:nth-child(2) svg { width: 14px; height: 14px; }
.control-end button:nth-child(1) { margin-right: 4px; }
.list-btn { margin-left: 8px; }
.list-btn svg { width: 12px; height: 10px; }

/* Shared pieces */
.work { display: flex; flex: 1; min-height: 0; }
.strip { display: flex; align-items: center; flex: none; height: 12px; padding: 0 5px; background: var(--head); color: var(--icon); border-bottom: 1px solid var(--line); }
.strip.end { justify-content: flex-end; }
.arrows { width: 10px; height: 8px; }
.grip, .group::before, .resize {
  background: repeating-linear-gradient(90deg, #333 0 1px, transparent 1px 2px) center 3px / 20px 4px no-repeat;
}

/* Toolbar */
.tools { width: 74px; flex: none; display: flex; flex-direction: column; border-right: 3px solid #3d3d3d; border-left: 1px solid #3d3d3d; color: var(--icon); }
.grip { height: 19px; }
.tool-grid { display: grid; grid-template-columns: repeat(2, 30px); grid-auto-rows: 24px; margin: 0 5px; padding-bottom: 1px; border-bottom: 1px solid #474747; }
.tool-grid button { display: grid; place-items: center; position: relative; width: 28px; height: 22px; justify-self: center; align-self: center; }
.tool-grid svg { width: 22px; height: 22px; }
.tool-grid .on { background: #2e2e2e; border-radius: 2px; }
.more::after { content: ""; position: absolute; right: 1px; bottom: 1px; border: 2px solid; border-color: transparent currentColor currentColor transparent; }
.fillstroke { width: 60px; height: 58px; margin: 3px 5px; }
.modes { display: grid; grid-template-columns: repeat(3, 19px); margin: 2px 5px 1px; border: 1px solid #484848; width: 59px; }
.modes button { display: grid; place-items: center; height: 18px; }
.modes button + button { border-left: 1px solid #484848; }
.modes .on { background: #333; }
.modes svg { width: 13px; height: 13px; }
.screen { align-self: center; margin-top: 7px; }
.screen svg { width: 22px; height: 16px; }
.dots { display: flex; justify-content: center; gap: 2px; margin-top: 22px; }
.dots i { width: 4px; height: 4px; border-radius: 50%; background: var(--icon); }

/* Document */
.document { flex: 1; display: flex; flex-direction: column; min-width: 0; }
.doc-tabs { flex: none; height: 29px; background: var(--head); border-bottom: 1px solid #333; }
.doc-tab { display: inline-flex; align-items: center; height: 28px; padding: 0 5px 0 9px; background: var(--bar); border-right: 1px solid #333; font-size: 11px; gap: 15px; }
.stage { flex: 1; display: flex; min-height: 0; }
.artboard { position: relative; flex: 1; background: #212121; overflow: hidden; }
.art { position: absolute; left: 3px; top: 197px; width: 438px; height: 63px; }
.art-text { position: absolute; left: -2px; top: -1px; font: 900 57px/63px "Inter", sans-serif; color: #fff; }
.bounds { position: absolute; inset: 0; width: 438px; height: 63px; overflow: visible; }
.beyond { width: 20px; background: #606060; }
.vscroll { display: flex; flex-direction: column; justify-content: space-between; align-items: center; width: 19px; padding: 4px 1px 4px 0; background: #484848; border-right: 3px solid #3d3d3d; color: #aaa; }
.up { transform: rotate(180deg); }
.status { display: flex; align-items: center; flex: none; height: 17px; padding-left: 4px; }
.status .combo { height: 17px; border-radius: 0; border-bottom: 0; }
.status .combo select { height: 16px; padding-left: 2px; }
.zoomlvl { width: 68px; }
.angle { width: 68px; margin: 0 5px 0 5px; }
.boardno { width: 58px; margin-left: 4px; }
.page { display: grid; place-items: center; width: 17px; height: 16px; color: #747474; }
.boardno + .page { margin-left: 3px; }
.hscroll { display: flex; align-items: center; flex: 1; height: 17px; margin-left: 4px; margin-right: 19px; padding-right: 3px; background: #484848; color: #aaa; }
.thumb { width: 442px; height: 15px; border-radius: 0 8px 8px 0; background: #606060; }
.hscroll svg { margin-left: auto; }

/* Icon dock */
.dock { width: 40px; flex: none; color: var(--icon); border-right: 3px solid #3d3d3d; }
.group { border-bottom: 1px solid var(--line); padding-bottom: 3px; display: flex; flex-direction: column; align-items: center; }
.group::before { content: ""; width: 38px; height: 9px; }
.group button { width: 28px; height: 28px; display: grid; place-items: center; }
.group svg { width: 22px; height: 22px; }

/* Layers panel */
.panel { flex: 0 0 311px; display: flex; flex-direction: column; }
.tabs { display: flex; flex: none; height: 27px; background: var(--head); box-shadow: inset 0 -1px var(--line); color: #a4a4a4; }
.tabs button { padding: 0 8px 2px; border-right: 1px solid var(--line); }
.tabs .on { background: var(--bar); color: #fff; }
.tabs .menu-btn { margin-left: auto; border: 0; padding: 0 5px; color: var(--icon); }
.menu-btn svg { width: 12px; height: 10px; }
.layers { flex: 1; margin: 6px 5px 0 5px; border: 1px solid #606060; }
.layer { display: flex; align-items: center; height: 21px; border-bottom: 1px solid #606060; }
.eye { width: 14px; height: 10px; }
.c-eye, .c-lock { display: grid; place-items: center; flex: none; width: 21px; height: 20px; border-right: 1px solid #606060; color: #bdbdbd; }
.c-lock svg { width: 10px; height: 12px; }
.bar { width: 4px; height: 20px; margin-left: 1px; background: #5b7de3; }
.c-open { width: 25px; display: grid; place-items: center; }
.child .c-open { width: 48px; }
.thumbnail { display: grid; place-items: center; flex: none; width: 18px; height: 18px; background: #fff; border: 1px solid #000; }
.thumbnail.bands { background: linear-gradient(#fff 3px, #222 3px 13px, #fff 13px); }
.thumbnail i { width: 6px; height: 1px; background: #ddd; }
.name { flex: 1; padding-left: 5px; }
.c-target { display: flex; align-items: center; width: 36px; height: 20px; padding-left: 6px; gap: 6px; border-left: 1px solid #606060; }
.first .c-target { background: linear-gradient(45deg, transparent 50%, #ddd 50%) right top / 6px 6px no-repeat; }
.ring { width: 8px; height: 8px; border: 1px solid #ddd; border-radius: 50%; }
.ring.full { width: 12px; height: 12px; margin-left: -2px; margin-right: -2px; background: #aaa; border: 1px solid #ddd; box-shadow: inset 0 0 0 1px #555; }
.sq { width: 8px; height: 8px; background: #5b7de3; border: 1px solid #111; }
.sq.small { width: 6px; height: 6px; margin-left: 1px; }
.panel-foot { display: flex; align-items: center; justify-content: space-between; height: 20px; padding: 0 26px 0 5px; }
.panel-foot div { display: flex; gap: 12px; color: #ddd; }
.panel-foot svg { width: 14px; height: 14px; }
.panel-foot .dim { color: #747474; }
.panel-foot button:nth-child(n+3) svg { width: 12px; height: 12px; margin: 1px; }

.taskbar { flex: none; height: 2px; background: #1f2420; }
.taskbar span { display: block; width: 36px; height: 2px; margin-left: 223px; background: #5a5a5a; }

/* Appearance panel */
.appearance { position: absolute; left: 818px; top: 195px; width: 242px; background: var(--bar); border: 1px solid #303030; border-radius: 3px; box-shadow: 0 1px 4px #0006; }
.appearance .strip { height: 13px; gap: 8px; padding: 0 3px; border-radius: 3px 3px 0 0; border-bottom-color: #3a3a3a; }
.attrs { margin: 6px 5px 0; border: 1px solid #616161; }
.attr { display: flex; align-items: center; height: 25px; border-bottom: 1px solid #616161; }
.attr b { margin-left: 28px; font-size: 11px; font-weight: 600; }
.chip.edge { margin-left: 2px; border: 1px solid #222; }
.c-vis { display: grid; place-items: center; width: 25px; height: 24px; border-right: 1px solid var(--line); color: var(--icon); }
.c-vis.off { color: #777; }
.tw { margin: 0 9px 0 6px; }
.nochip { width: 17px; height: 17px; margin-left: 9px; }
.sub .dotted { margin-left: 48px; }
.main-op .dotted { margin-left: 25px; }
.attr .dotted + span { margin-left: 3px; }
.sel { background: #4c637d; border-color: #4c637d; }
.fill-name { width: 40px; }
.sel .drop { background: #454545; border: 0; width: 17px; }
.plain { padding-left: 50px; }
.attr-rest { height: 19px; }
.attr-foot { display: flex; align-items: center; height: 19px; padding: 0 27px 0 11px; gap: 14px; color: var(--icon); }
.attr-foot svg { width: 12px; height: 12px; }
.fx { font: italic 400 14px/16px "Open Sans", sans-serif; }
.spacer { flex: 1; }
.resize { height: 7px; border-top: 1px solid #333; background-color: #484848; background-position: center 1px; }

/* Window menu */
.window-menu {
  position: absolute;
  left: 428px;
  top: 0;
  width: 364px;
  height: 100vh;
  overflow: hidden;
  padding: 0 2px;
  background: #f1f1f1;
  border: 1px solid #bcbcbc;
  border-bottom: 0;
  box-shadow: 4px 2px 4px #0007;
  color: #000;
  font-size: 12px;
  font-weight: 400;
}
.scroll-up { height: 19px; padding: 8px 0 0 17px; }
.scroll-up svg, .scroll-down svg { width: 10px; height: 5px; }
.scroll-down { padding: 7px 0 0 17px; }
.item { display: flex; align-items: center; width: 100%; height: 22px; padding-right: 17px; text-align: left; }
.item:disabled { color: #6d6d6d; }
.hot { background: var(--hot); }
.mark { display: grid; place-items: center; width: 22px; height: 22px; margin-right: 10px; }
.checked { background: var(--hot); }
.mark svg { width: 12px; height: 10px; }
.item kbd { margin-left: auto; font: inherit; }
.item .sub { width: 8px; height: 10px; margin: 0 -9px 0 auto; }
.window-menu hr { height: 1px; margin: 3px 0 3px 28px; border: 0; background: #cfcfcf; }
```
